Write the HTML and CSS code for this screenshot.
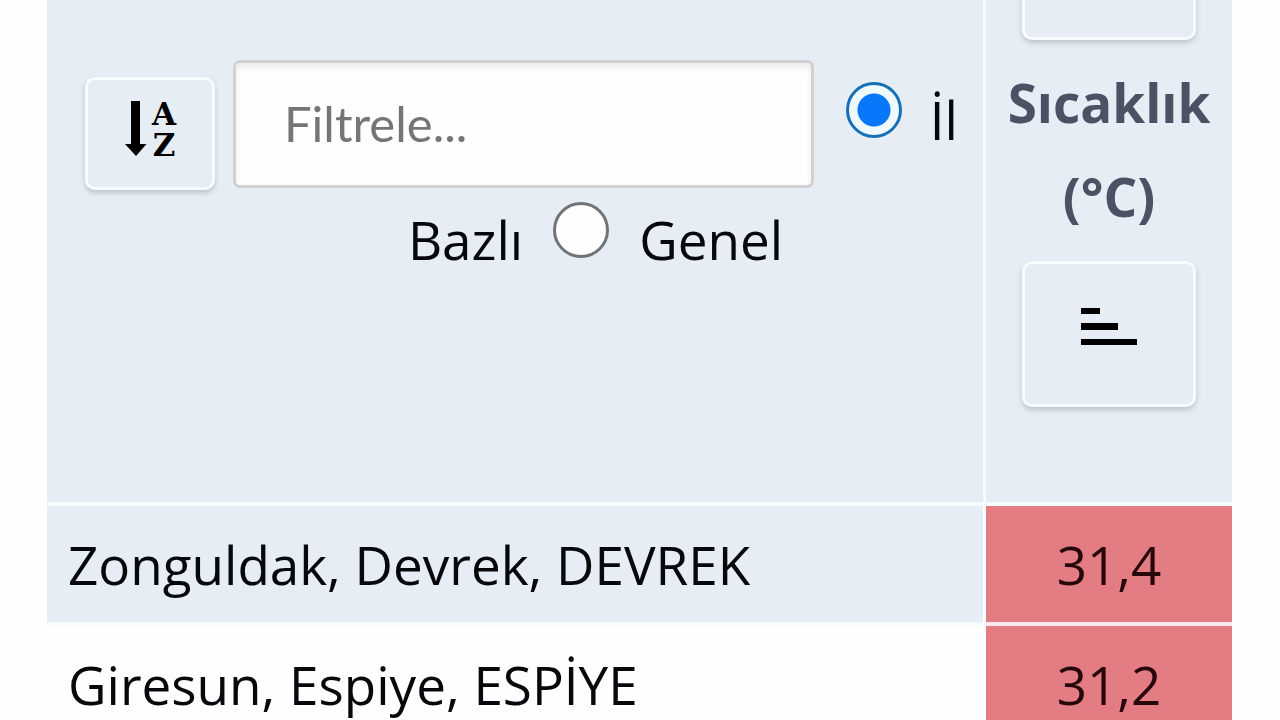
FILE: index.html
```html
<!DOCTYPE html>
<html lang="tr">
<head>
<meta charset="utf-8">
<meta name="viewport" content="width=device-width, initial-scale=1">
<title>Sıcaklık</title>
<link rel="stylesheet" href="styles.css">
</head>
<body>
<main class="page">
  <table class="stations">
    <thead>
      <tr>
        <th class="place-head">
          <div class="filter-row">
            <button class="tile tile-az" type="button" aria-label="Ada göre sırala">
              <svg class="icon-az" viewBox="0 0 60 74" aria-hidden="true">
                <path d="M11 9h9v43h6.500l-10.500 12-11-12h6z"/>
                <text x="44" y="33" text-anchor="middle">A</text>
                <text x="44" y="64" text-anchor="middle">Z</text>
              </svg>
            </button>
            <input class="filter" type="text" placeholder="Filtrele..." aria-label="Filtrele">
            <input class="choice" type="radio" name="scope" id="scope-city" checked>
            <label class="label-first" for="scope-city">İl</label>
          </div>
          <div class="scope-row">
            <label for="scope-city">Bazlı</label>
            <input class="choice" type="radio" name="scope" id="scope-all">
            <label for="scope-all">Genel</label>
          </div>
        </th>
        <th class="value-head">
          <div class="value-tools">
            <button class="tile tile-bars tile-top" type="button" aria-label="Azalan sırala"></button>
            <span class="value-title">Sıcaklık (°C)</span>
            <button class="tile tile-bars" type="button" aria-label="Artan sırala">
              <svg class="icon-bars" viewBox="0 0 56 38" aria-hidden="true">
                <path d="M0 0h19v6H0zM0 15h37v7H0zM0 31h56v6H0z"/>
              </svg>
            </button>
          </div>
        </th>
      </tr>
    </thead>
    <tbody>
      <tr class="tinted">
        <td class="place">Zonguldak, Devrek, DEVREK</td>
        <td class="value">31,4</td>
      </tr>
      <tr>
        <td class="place">Giresun, Espiye, ESPİYE</td>
        <td class="value">31,2</td>
      </tr>
    </tbody>
  </table>
</main>
</body>
</html>
```
FILE: styles.css
```css
* {
  box-sizing: border-box;
}

body {
  margin: 0;
  overflow: hidden;
  background: #fefefe;
  color: #07080c;
  font-family: "Open Sans", "Noto Sans", sans-serif;
  font-size: 53px;
}

.page {
  padding: 0 48px 0 47px;
}

.stations {
  width: 100%;
  border-collapse: separate;
  border-spacing: 0;
  table-layout: fixed;
}

th,
td {
  padding: 0;
  border-bottom: 4px solid #f6fbff;
  background-clip: padding-box;
}

th {
  height: 506px;
  vertical-align: top;
  font-weight: 400;
  background-color: #e6edf4;
}

.place-head {
  padding: 60px 25px 0 38px;
  border-right: 3px solid #f6fbff;
}

.value-head {
  width: 246px;
}

.filter-row,
.scope-row {
  display: flex;
  align-items: flex-start;
}

.scope-row {
  justify-content: center;
  gap: 30px;
  height: 100px;
  padding: 12px 0 0 148px;
}

.scope-row label {
  line-height: 76px;
}

.tile {
  display: flex;
  align-items: center;
  justify-content: center;
  padding: 0;
  border: 3px solid #f8fbff;
  border-radius: 10px;
  background: #e7edf5;
  box-shadow: 0 3px 5px rgba(90, 105, 120, 0.3);
}

.tile-az {
  width: 130px;
  height: 113px;
  margin: 17px 18px 0 0;
  padding-bottom: 10px;
}

.tile-bars {
  width: 174px;
  height: 146px;
  padding-bottom: 14px;
}

.tile-top {
  margin-top: -106px;
}

.icon-az {
  width: 60px;
  height: 74px;
}

.icon-az text {
  font-family: "DejaVu Serif", serif;
  font-size: 31px;
  font-weight: 700;
}

.icon-bars {
  width: 56px;
  height: 38px;
}

.filter {
  flex: 1;
  min-width: 0;
  height: 128px;
  padding: 0 48px 2px;
  border: 3px solid #cfd1d2;
  border-radius: 7px;
  background: #fefefe;
  box-shadow: inset 0 4px 6px rgba(0, 0, 0, 0.08);
  font-family: Lato, sans-serif;
  font-size: 49px;
}

.filter::placeholder {
  color: #757575;
  opacity: 1;
}

.choice {
  flex: none;
  appearance: none;
  width: 56px;
  height: 56px;
  margin: 0;
  border: 3px solid #717477;
  border-radius: 50%;
  background: #fefefe;
}

.choice:checked {
  border-color: #176fb5;
  background: radial-gradient(circle, #0877fa 16px, #eefaff 17px);
}

.filter-row .choice {
  margin: 22px 28px 0 32px;
}

.label-first {
  margin-top: 20px;
  line-height: 80px;
}

.value-tools {
  display: flex;
  flex-direction: column;
  align-items: center;
}

.value-title {
  width: 210px;
  margin: 16px 0 17px;
  color: #4b5264;
  font-size: 53px;
  font-weight: 700;
  line-height: 94px;
  text-align: center;
}

td {
  height: 120px;
}

.place {
  padding-left: 21px;
  border-right: 3px solid #fefefe;
}

.tinted .place {
  background-color: #e6edf4;
}

.value {
  border-bottom-color: #fbeaed;
  background-color: #e47c84;
  color: #27070b;
  text-align: center;
}
```
